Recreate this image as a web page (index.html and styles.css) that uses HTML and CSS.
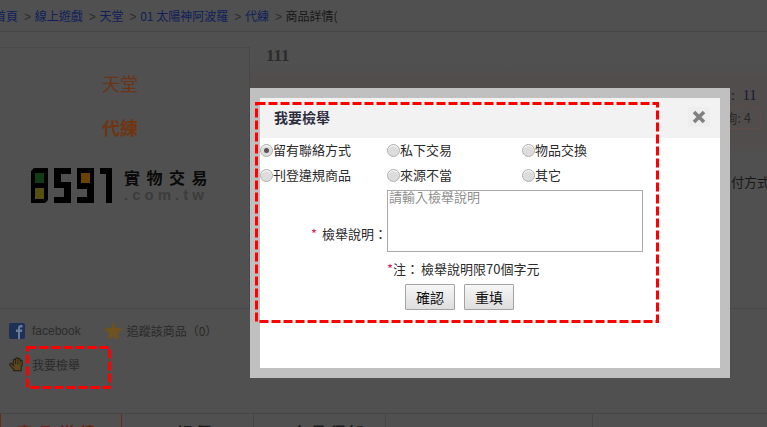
FILE: index.html
```html
<!DOCTYPE html>
<html lang="zh-Hant">
<head>
<meta charset="utf-8">
<title>我要檢舉</title>
<link rel="stylesheet" href="styles.css">
</head>
<body>
<div class="page">
  <nav class="crumbs">
    <a>首頁</a><span class="sep">&gt;</span><a>線上遊戲</a><span class="sep">&gt;</span><a>天堂</a><span class="sep">&gt;</span><a>01 太陽神阿波羅</a><span class="sep">&gt;</span><a>代練</a><span class="sep">&gt;</span><span>商品詳情(</span>
  </nav>
  <main class="main">
    <section class="gallery">
      <div class="game">天堂</div>
      <div class="game strong">代練</div>
      <div class="logo">
        <svg class="digits" width="81" height="35" viewBox="0 0 81 35">
          <path fill="#000" d="M3 0h14v32l-3 3H0V3zM23 0h17v6H30v8h10v21H23v-6h10v-9H23zM46 0h17v35H46v-6h10v-8H46zM69 0h12v35h-6V6h-6z"/>
          <rect x="4" y="5" width="9" height="10" fill="#143c14"/>
          <rect x="4" y="20" width="9" height="11" fill="#55500f"/>
          <rect x="50" y="5" width="9" height="10" fill="#6a4208"/>
        </svg>
        <div class="logo-text">
          <div class="logo-zh">實物交易</div>
          <div class="logo-en">.com.tw</div>
        </div>
      </div>
    </section>
    <section class="detail">
      <h1 class="title">111</h1>
      <div class="band">
        <div class="views">: <b>11</b></div>
        <div class="pill">詢: 4</div>
      </div>
      <div class="pay">付方式</div>
    </section>
  </main>
  <div class="social">
    <div class="social-row">
      <span class="fb"><svg width="16" height="16" viewBox="0 0 16 16"><rect width="16" height="16" rx="2" fill="#1d3157"/><path fill="#6b7a99" d="M9 16V9H7V6.500h2V5c0-2 1-3 3-3h1.500v2.500H12c-.7 0-1 .3-1 1v1h2.300L13 9h-2v7z"/></svg>facebook</span>
      <span class="follow"><svg width="19" height="18" viewBox="0 0 19 18"><path fill="#6e5220" d="M9.500 0l2.700 6 6.800.7-5 4.500 1.400 6.800-5.900-3.500L3.600 18 5 11.200 0 6.700 6.800 6z"/></svg>追蹤該商品（0）</span>
    </div>
    <div class="social-row report-row">
      <svg class="hand" width="14" height="15" viewBox="0 0 14 15">
        <g fill="none" stroke="#211a0c" stroke-width="3.400" stroke-linecap="round"><path d="M5.500 8V3.500M7.800 7V2M10 7V2.500M12 8V4.500M5 11L2 7.500"/><path d="M6 8h5v4.500H6z"/></g>
        <g fill="none" stroke="#5e4822" stroke-width="1.500" stroke-linecap="round"><path d="M5.500 8V3.500M7.800 7V2M10 7V2.500M12 8V4.500M5 11L2 7.500"/><path d="M6 8h5v4.500H6z" fill="#5e4822"/></g>
      </svg>
      <span>我要檢舉</span>
    </div>
  </div>
  <div class="tabs">
    <span class="tab active">商品詳情</span>
    <span class="tab second">評價</span>
    <span class="tab third">交易須知</span>
    <span class="tab fourth"></span>
  </div>
</div>

<div class="mark mark-link"><svg width="85" height="43"><rect x="1.500" y="1.500" width="82" height="40"/></svg></div>

<div class="modal">
  <div class="dialog">
    <header class="dialog-head">
      <h2>我要檢舉</h2>
      <button class="close" type="button" aria-label="關閉"><svg width="14" height="14" viewBox="0 0 14 14"><path d="M2 2l10 10M12 2L2 12" stroke="#808080" stroke-width="3.600"/></svg></button>
    </header>
    <form class="form">
      <div class="options">
        <label class="opt"><span class="radio on"></span>留有聯絡方式</label>
        <label class="opt"><span class="radio"></span>私下交易</label>
        <label class="opt"><span class="radio"></span>物品交換</label>
        <label class="opt"><span class="radio"></span>刊登違規商品</label>
        <label class="opt"><span class="radio"></span>來源不當</label>
        <label class="opt"><span class="radio"></span>其它</label>
      </div>
      <div class="field">
        <div class="field-label"><i>*</i>檢舉說明：</div>
        <div class="textarea">請輸入檢舉說明</div>
      </div>
      <div class="note"><i>*</i>注：<span class="note-body">檢舉說明限70個字元</span></div>
      <div class="actions"><span class="btn">確認</span><span class="btn">重填</span></div>
    </form>
    <div class="mark mark-form"><svg width="404" height="221"><rect x="1.500" y="1.500" width="401" height="218"/></svg></div>
  </div>
</div>
</body>
</html>
```
FILE: styles.css
```css
* { box-sizing: border-box; }
html, body { margin: 0; height: 100%; }
body {
  width: 767px; height: 427px; overflow: hidden; position: relative;
  background: #505050; color: #222;
  font: 13px/18px "Noto Sans CJK TC", "Liberation Sans", sans-serif;
}
.page { display: flex; flex-direction: column; height: 427px; }
.crumbs {
  height: 32px; padding: 7px 0 0 0; margin-left: -6px; border-bottom: 1px solid #464646;
  color: #181818; white-space: nowrap; flex: none; font-size: 12px;
}
.crumbs a { color: #0f1f5a; }
.crumbs .sep { margin: 0 3.700px 0 6px; color: #2c2c2c; font-family: "Liberation Sans", sans-serif; }
.main { display: flex; flex: none; height: 276px; }
.gallery {
  width: 250px; height: 262px; margin-top: 15px; flex: none; padding-right: 9px;
  border-top: 1px solid #484848; border-right: 1px solid #484848;
  display: flex; flex-direction: column; align-items: center;
}
.game { font: 18px/25px "Noto Sans CJK TC", serif; color: #6b3415; margin-top: 23px; height: 25px; }
.game + .game { margin-top: 19px; }
.game.strong { font-weight: bold; color: #703410; }
.logo { display: flex; gap: 12px; margin-top: 28px; align-self: flex-start; margin-left: 31px; }
.logo-zh { font: bold 16px/18px "Noto Sans CJK TC", serif; letter-spacing: 6.500px; color: #0a0a0a; white-space: nowrap; }
.logo-en { font: bold 15px/16px "Liberation Sans", sans-serif; letter-spacing: 4px; color: #3c3c3c; white-space: nowrap; margin-top: 1px; }
.detail { flex: 1; padding: 13px 0 0 16px; position: relative; }
.title { margin: 0; font: bold 17px/22px "Liberation Serif", serif; color: #2c2c2c; }
.band { position: absolute; left: 0; right: 0; top: 34px; height: 90px; background: linear-gradient(#505050, #514d4c 15%, #514d4c 85%, #505050); }
.views { position: absolute; left: 481px; top: 20px; white-space: nowrap; color: #181818; font-family: "Liberation Serif", serif; font-size: 14px; }
.views b { font-weight: normal; margin-left: 4px; font-size: 15px; color: #141c30; }
.pill {
  position: absolute; left: 470px; top: 41px; width: 41px; height: 22px;
  border: 1px solid #5f4c44; border-radius: 4px; padding-right: 9px; text-align: right;
  line-height: 20px; color: #2a2a2a; white-space: nowrap;
}
.pill::before {
  content: ""; position: absolute; left: 21px; top: -4px; width: 6px; height: 6px;
  border-left: 1px solid #5f4c44; border-top: 1px solid #5f4c44; background: #514d4c; transform: rotate(45deg);
}
.pay { position: absolute; top: 141px; left: 481px; white-space: nowrap; color: #181818; }
.social { height: 105px; border-top: 1px solid #474747; padding: 13px 0 0 9px; flex: none; color: #2a2a2a; font-size: 12px; }
.social-row { display: flex; align-items: center; gap: 23px; height: 17px; }
.fb, .follow { display: inline-flex; align-items: center; }
.fb { gap: 7px; color: #2c2c2c; font-family: "Liberation Sans", sans-serif; }
.follow { gap: 4px; }
.report-row { margin-top: 17px; gap: 9px; }
.tabs { display: flex; height: 14px; flex: none; border-top: 1px solid #464646; overflow: hidden; margin-bottom: -1px; }
.tab {
  height: 14px; padding: 10px 0 0 16px; border-right: 1px solid #464646; flex: none; white-space: nowrap;
  font: bold 15px/15px "Noto Sans CJK TC", sans-serif; color: #1c1c1c;
}
.tab.active { width: 122px; border: 1px solid #6a2c14; border-bottom: 0; color: #6a2010; margin-top: -1px; height: 15px; letter-spacing: 6px; }
.tab.second { width: 132px; padding-left: 55px; letter-spacing: 4px; }
.tab.third { width: 132px; padding-left: 38px; letter-spacing: 4px; }
.tab.fourth { width: 207px; }

.mark { position: absolute; pointer-events: none; }
.mark svg { display: block; }
.mark rect { fill: none; stroke: #ff0000; stroke-width: 3; stroke-dasharray: 9 3; }
.mark-link { left: 26px; top: 346px; }
.modal {
  position: absolute; left: 250px; top: 88px; width: 480px; height: 290px;
  background: #c0c0c0; padding: 10px;
}
.dialog { position: relative; width: 460px; height: 270px; background: #fff; }
.dialog-head {
  height: 40px; background: #f2f2f2; padding: 9px 0 0 14px; display: flex; justify-content: space-between;
}
.dialog-head h2 { margin: 0; font: bold 14px/20px "Noto Sans CJK TC", sans-serif; color: #2d2d40; }
.close {
  width: 22px; height: 20px; margin: 0 10px 0 0; padding: 0; border: 0; background: #eeeeee;
  display: flex; align-items: center; justify-content: center;
}
.options {
  display: grid; grid-template-columns: 127px 135px 1fr; grid-auto-rows: 25px;
}
.opt { display: flex; align-items: center; height: 24px; white-space: nowrap; color: #2a2a2a; }
.radio {
  width: 13px; height: 13px; border-radius: 50%; background: #dcdcdc; border: 1px solid #b0b0b0;
  box-shadow: inset 0 1px 1px #fff; flex: none; display: flex; align-items: center; justify-content: center;
}
.radio.on::after { content: ""; width: 5px; height: 5px; border-radius: 50%; background: #555; }
.field { display: flex; margin-top: 2px; }
.field-label { width: 127px; height: 62px; text-align: right; padding-top: 35px; white-space: nowrap; color: #2a2a2a; }
.textarea {
  width: 256px; height: 62px; border: 1px solid #a9a9a9; padding: 0 1px; color: #8e8e8e; line-height: 12px;
}
i { font-style: normal; color: #e8185c; margin-right: 5px; }
.note { margin: 8px 0 0 127px; height: 18px; color: #2a2a2a; }
.note i { margin-right: 0; }
.note-body { margin-left: 2px; }
.actions { display: flex; gap: 9px; margin: 6px 0 0 145px; }
.btn {
  width: 50px; height: 26px; border: 1px solid #a3a3a3; border-radius: 1px; text-align: center; line-height: 24px;
  font-size: 14px; color: #111; background: linear-gradient(#f6f6f6, #dedede);
}
.mark-form { left: -5px; top: 4px; }
```
